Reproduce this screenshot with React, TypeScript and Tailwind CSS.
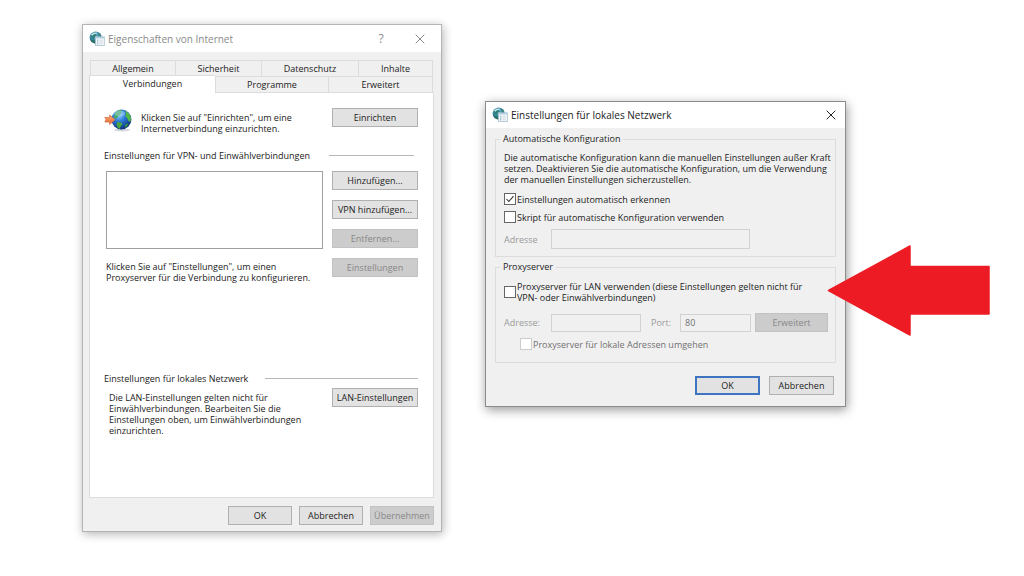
import type { ReactNode } from "react";

const BODY_FONT = "font-['Open_Sans','Noto_Sans',sans-serif] text-[9px] leading-[11px]";
const TITLE_FONT = "font-['Open_Sans','Noto_Sans',sans-serif] text-[10px] leading-[16px]";

function TitleIcon() {
  return (
    <svg className="h-4 w-4 shrink-0" viewBox="0 0 16 16" aria-hidden="true">
      <defs>
        <radialGradient id="titleGlobe" cx="0.4" cy="0.3" r="0.75">
          <stop offset="0" stopColor="#b4e2f2" />
          <stop offset="0.45" stopColor="#3f8fae" />
          <stop offset="1" stopColor="#123f5c" />
        </radialGradient>
      </defs>
      <circle cx="6.6" cy="6.6" r="6" fill="url(#titleGlobe)" />
      <path d="M1.5 5C3 2.5 5 1.2 7 1.2L6.6 3 8 4.5 5.6 6.2 5 8.4 3 7.4Z" fill="#2f7f7a" />
      <path d="M9 1.4C10.6 2 12 3.6 12.4 5.2L10.4 4.8Z" fill="#3b8c76" />
      <path d="M3.5 9.2L6 10 5.4 12.4C4 12 2.6 10.8 2 9.6Z" fill="#2b7558" />
      <path d="M2.6 4.2C4 2.6 5.6 2 7.6 2.1" stroke="#e4f8fd" strokeWidth="1.4" fill="none" opacity="0.85" />
      <rect x="6.5" y="5.8" width="8.8" height="8.7" fill="#f4f8fb" stroke="#a9bfce" strokeWidth="0.8" />
      <path d="M6.5 6.8H15.3" stroke="#a4c8de" strokeWidth="1.2" />
      <path d="M8 9.2h1.3M8 11h1.3M8 12.8h1.3" stroke="#7ea8c4" strokeWidth="1" />
      <path d="M10.4 9.2h3.3M10.4 11h3.3M10.4 12.8h3.3" stroke="#ccd8e0" strokeWidth="0.9" />
    </svg>
  );
}

function GlobeArrowIcon() {
  return (
    <svg className="h-6 w-7 shrink-0" viewBox="0 0 28 24" aria-hidden="true">
      <defs>
        <radialGradient id="globe" cx="0.38" cy="0.28" r="0.8">
          <stop offset="0" stopColor="#8fd0ff" />
          <stop offset="0.4" stopColor="#2a79d8" />
          <stop offset="1" stopColor="#0a2470" />
        </radialGradient>
        <linearGradient id="arrow" x1="0" y1="0" x2="0" y2="1">
          <stop offset="0" stopColor="#ffa878" />
          <stop offset="1" stopColor="#e2682f" />
        </linearGradient>
      </defs>
      <ellipse cx="18" cy="22" rx="8" ry="1.4" fill="#b8bcc4" opacity="0.6" />
      <circle cx="17.4" cy="11.5" r="10" fill="url(#globe)" />
      <path d="M10.5 6C12 3.6 14 2.2 16.6 1.8L18.6 3.6 16.6 5.2 16.8 7 14 8.6 12.6 10.6 10 10Z" fill="#43a765" />
      <path d="M21 2.6C24.2 4.2 26.6 7 27.1 10.4L26.2 14 24.2 12.8 23 9.8 21 8.2 22.1 6Z" fill="#52b848" />
      <path d="M13.6 14L17 14.4 18.6 16.4 16.8 18 15.8 20.8C13 19.8 12.8 17 12.6 15.4Z" fill="#4aa63f" />
      <path d="M21.5 16L24.6 15.8 22.6 19 20.7 19.4Z" fill="#2f9440" />
      <ellipse cx="15.8" cy="5.4" rx="5.5" ry="3" fill="#d5f1ff" opacity="0.35" />
      <path d="M0.8 9.4H5.6V7L11.2 11.7 5.6 16.4V14H0.8L2 11.7Z" fill="url(#arrow)" stroke="#d06c45" strokeWidth="0.7" />
    </svg>
  );
}

function CloseIcon() {
  return (
    <svg className="h-[10px] w-[10px]" viewBox="0 0 10 10" aria-hidden="true">
      <path d="M0.7 0.7L9.3 9.3M9.3 0.7L0.7 9.3" stroke="currentColor" strokeWidth="1" fill="none" />
    </svg>
  );
}

function Button({ children, className = "w-[86px]", disabled = false, primary = false }: {
  children: ReactNode;
  className?: string;
  disabled?: boolean;
  primary?: boolean;
}) {
  const tone = disabled
    ? "border border-[#c2c2c2] bg-[#cccccc] text-[#888888]"
    : primary
      ? "border-2 border-[#3f74c0] bg-[#e2e2e2] text-[#222222]"
      : "border border-[#b0b0b0] bg-[#e2e2e2] text-[#222222]";
  return (
    <button type="button" disabled={disabled} className={`flex h-[19px] shrink-0 items-center justify-center whitespace-nowrap ${tone} ${className}`}>
      {children}
    </button>
  );
}

function Checkbox({ id, checked = false, disabled = false }: { id: string; checked?: boolean; disabled?: boolean }) {
  return (
    <span className="relative flex h-3 w-3 shrink-0">
      <input
        id={id}
        type="checkbox"
        defaultChecked={checked}
        disabled={disabled}
        className="peer h-3 w-3 appearance-none border border-[#666666] bg-white disabled:border-[#cccccc]"
      />
      <svg className="pointer-events-none absolute inset-0 hidden h-3 w-3 peer-checked:block" viewBox="0 0 12 12" aria-hidden="true">
        <path d="M2.5 6L4.8 8.5 9.5 3.2" stroke="#333333" strokeWidth="1.1" fill="none" />
      </svg>
    </span>
  );
}

function Tab({ children, selected = false, className = "" }: { children: ReactNode; selected?: boolean; className?: string }) {
  return (
    <button
      type="button"
      role="tab"
      aria-selected={selected}
      className={`flex items-center justify-center border-[#dcdcdc] text-[#222222] ${selected ? "-mt-px h-[18px] border-t border-l bg-white" : "h-4 border-t border-l bg-[#f0f0f0]"} ${className}`}
    >
      {children}
    </button>
  );
}

function InternetProperties() {
  return (
    <section className="absolute top-6 left-[82px] w-[360px] border border-[#b4b4b4] bg-[#f0f0f0] shadow-[1px_2px_9px_rgba(0,0,0,0.3)]">
      <header className={`flex h-[27px] items-center bg-white pl-[6px] text-[#8a8a8a] ${TITLE_FONT}`}>
        <TitleIcon />
        <h1 className="ml-[3px] flex-1">Eigenschaften von Internet</h1>
        <button type="button" aria-label="Hilfe" className="mr-7 w-3 text-[12px]">?</button>
        <button type="button" aria-label="Schließen" className="mr-4"><CloseIcon /></button>
      </header>

      <div className="pt-2 pr-[7px] pb-[6px] pl-[6px]">
        <div role="tablist">
          <div className="mx-px grid grid-cols-[85px_86px_97px_1fr] border-r border-[#dcdcdc]">
            <Tab>Allgemein</Tab>
            <Tab>Sicherheit</Tab>
            <Tab>Datenschutz</Tab>
            <Tab>Inhalte</Tab>
          </div>
          <div className="relative mr-px -mb-px grid grid-cols-[126px_113px_1fr] border-r border-[#dcdcdc]">
            <Tab selected className="pb-[3px]">Verbindungen</Tab>
            <Tab>Programme</Tab>
            <Tab>Erweitert</Tab>
          </div>
        </div>

        <div role="tabpanel" className="border border-[#dcdcdc] bg-white pt-[15px] pr-[15px] pb-[61px] pl-[14px] text-[#222222]">
          <div className="flex items-start">
            <GlobeArrowIcon />
            <p className="mt-1 ml-[9px] flex-1">
              Klicken Sie auf "Einrichten", um eine
              <br />
              Internetverbindung einzurichten.
            </p>
            <Button>Einrichten</Button>
          </div>

          <div className="mt-4 flex items-center pr-1">
            <h2 className="w-[225px]">Einstellungen für VPN- und Einwählverbindungen</h2>
            <hr className="flex-1 border-[#b8b8b8]" />
          </div>

          <div className="mt-[10px] flex justify-between">
            <div className="ml-[2px]">
              <div role="listbox" aria-label="Verbindungen" className="h-[78px] w-[217px] border border-[#a0a0a0]" />
              <p className="mt-3 whitespace-nowrap">
                Klicken Sie auf "Einstellungen", um einen
                <br />
                Proxyserver für die Verbindung zu konfigurieren.
              </p>
            </div>
            <div className="flex flex-col gap-[10px]">
              <Button>Hinzufügen...</Button>
              <Button>VPN hinzufügen...</Button>
              <Button disabled>Entfernen...</Button>
              <Button disabled>Einstellungen</Button>
            </div>
          </div>

          <div className="mt-[90px] flex items-center">
            <h2 className="w-[161px]">Einstellungen für lokales Netzwerk</h2>
            <hr className="flex-1 border-[#b8b8b8]" />
          </div>

          <div className="mt-1 flex items-start justify-between">
            <p className="mt-1 ml-[5px]">
              Die LAN-Einstellungen gelten nicht für
              <br />
              Einwählverbindungen. Bearbeiten Sie die
              <br />
              Einstellungen oben, um Einwählverbindungen
              <br />
              einzurichten.
            </p>
            <Button>LAN-Einstellungen</Button>
          </div>
        </div>

        <footer className="mt-2 flex justify-end gap-[7px]">
          <Button className="w-16">OK</Button>
          <Button className="w-16">Abbrechen</Button>
          <Button className="w-16" disabled>Übernehmen</Button>
        </footer>
      </div>
    </section>
  );
}

function LanSettings() {
  return (
    <section className="absolute top-[101px] left-[485px] w-[361px] border border-[#8c8c8c] bg-[#f0f0f0] text-[#222222] shadow-[1px_3px_10px_rgba(0,0,0,0.4)]">
      <header className={`flex h-[26px] items-center bg-white pl-[6px] text-[#222222] ${TITLE_FONT}`}>
        <TitleIcon />
        <h1 className="ml-[3px] flex-1">Einstellungen für lokales Netzwerk</h1>
        <button type="button" aria-label="Schließen" className="mr-[9px]"><CloseIcon /></button>
      </header>

      <div className="px-[9px] pt-[5px] pb-[11px]">
        <fieldset className="min-w-0 border border-[#dcdcdc] pr-1 pb-[7px] pl-2">
          <legend className="-ml-1 px-[3px] leading-[12px]">Automatische Konfiguration</legend>
          <p className="mt-[7px] whitespace-nowrap">
            Die automatische Konfiguration kann die manuellen Einstellungen außer Kraft
            <br />
            setzen. Deaktivieren Sie die automatische Konfiguration, um die Verwendung
            <br />
            der manuellen Einstellungen sicherzustellen.
          </p>
          <div className="mt-2 flex items-center gap-px">
            <Checkbox id="auto-detect" checked />
            <label htmlFor="auto-detect">Einstellungen automatisch erkennen</label>
          </div>
          <div className="mt-[6px] flex items-center gap-px">
            <Checkbox id="auto-script" />
            <label htmlFor="auto-script">Skript für automatische Konfiguration verwenden</label>
          </div>
          <div className="mt-[6px] flex items-center text-[#9a9a9a]">
            <label htmlFor="script-address" className="w-[47px]">Adresse</label>
            <input id="script-address" disabled className="h-5 w-[199px] border border-[#d2d2d2] px-1" />
          </div>
        </fieldset>

        <fieldset className="mt-1 min-w-0 border border-[#dcdcdc] pr-1 pb-3 pl-2">
          <legend className="-ml-1 px-[3px] leading-[12px]">Proxyserver</legend>
          <div className="mt-2 flex items-center gap-px">
            <Checkbox id="use-proxy" />
            <label htmlFor="use-proxy" className="whitespace-nowrap">
              Proxyserver für LAN verwenden (diese Einstellungen gelten nicht für
              <br />
              VPN- oder Einwählverbindungen)
            </label>
          </div>
          <div className="mt-[10px] flex items-center text-[#9a9a9a]">
            <label htmlFor="proxy-address" className="w-[47px]">Adresse:</label>
            <input id="proxy-address" disabled className="h-[18px] w-[90px] border border-[#d2d2d2] px-1" />
            <label htmlFor="proxy-port" className="ml-[10px] w-[29px]">Port:</label>
            <input id="proxy-port" disabled defaultValue="80" className="h-[18px] w-[71px] border border-[#d2d2d2] px-1 text-[#707070]" />
            <Button className="ml-1 w-[73px]" disabled>Erweitert</Button>
          </div>
          <div className="mt-[6px] ml-4 flex items-center gap-px text-[#707070]">
            <Checkbox id="bypass-local" disabled />
            <label htmlFor="bypass-local">Proxyserver für lokale Adressen umgehen</label>
          </div>
        </fieldset>

        <footer className="mt-[13px] mr-[2px] flex justify-end gap-[9px]">
          <Button className="w-[65px]" primary>OK</Button>
          <Button className="w-[65px]">Abbrechen</Button>
        </footer>
      </div>
    </section>
  );
}

export default function App() {
  return (
    <main className={`relative min-h-screen overflow-hidden bg-white ${BODY_FONT}`}>
      <InternetProperties />
      <LanSettings />
      <svg className="pointer-events-none absolute top-[244px] left-[827px] h-[93px] w-[164px]" viewBox="0 0 164 93" aria-hidden="true">
        <path d="M1.5 46.5L83 2V22.5H162V70H83V91Z" fill="#ed1c24" stroke="#ed1c24" strokeWidth="1.5" strokeLinejoin="round" />
      </svg>
    </main>
  );
}
